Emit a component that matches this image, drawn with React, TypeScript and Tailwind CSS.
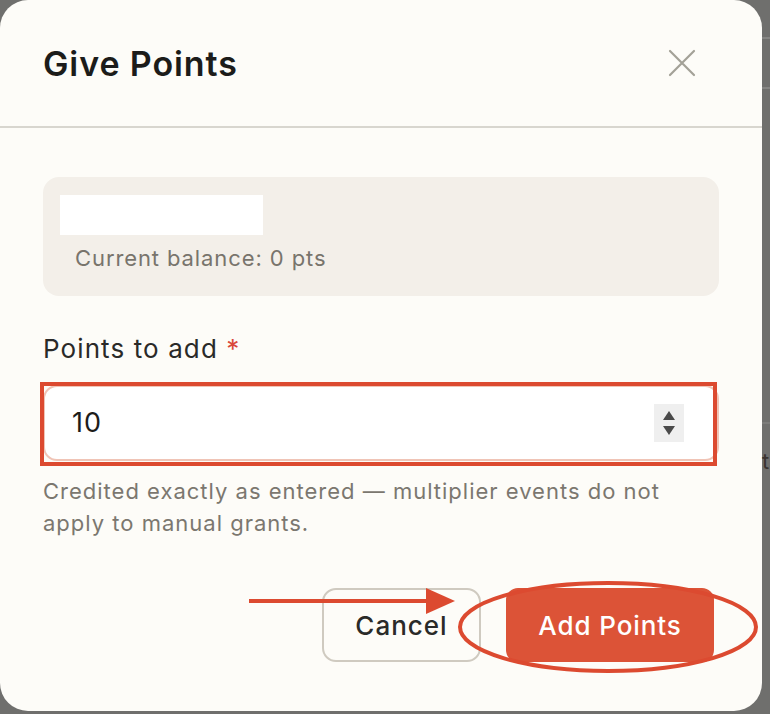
import React from "react";

const Spinner: React.FC = () => (
  <div className="flex h-[38px] w-[30px] flex-col items-center justify-center gap-[6px] bg-[#efefef]">
    <svg width="12" height="9" viewBox="0 0 12 9">
      <path d="M6 0 L12 9 L0 9 Z" fill="#4a4a4a" />
    </svg>
    <svg width="12" height="9" viewBox="0 0 12 9">
      <path d="M0 0 L12 0 L6 9 Z" fill="#4a4a4a" />
    </svg>
  </div>
);

// red marks drawn over the screenshot
const Annotations: React.FC = () => (
  <svg className="pointer-events-none absolute left-0 top-0" width="770" height="714" viewBox="0 0 770 714">
    <rect x="42" y="384" width="673" height="80" fill="none" stroke="#dc4a30" strokeWidth="4" />
    <line x1="249" y1="601" x2="430" y2="601" stroke="#dc4a30" strokeWidth="4" />
    <path d="M426 588 L455 601 L426 614 Z" fill="#dc4a30" />
    <ellipse cx="608" cy="627" rx="148" ry="44" fill="none" stroke="#dc4a30" strokeWidth="4" />
  </svg>
);

export default function App() {
  return (
    <div className="relative h-[714px] w-[770px] overflow-hidden bg-[#6f6f6d] font-['Inter',sans-serif]">
      {/* page behind the overlay, only a sliver shows */}
      <div className="absolute right-0 top-0 flex h-full w-[8px] flex-col">
        <div className="mt-[37px] h-[2px] bg-[#858583]" />
        <div className="mt-[48px] h-[2px] bg-[#858583]" />
        <div className="mt-[333px] h-[2px] bg-[#7c7c7a]" />
        <div className="mt-[26px] text-[22px] leading-none text-[#3a3330]">ts</div>
      </div>

      <div className="flex h-[711px] w-[762px] flex-col rounded-[28px] bg-[#fdfcf8]">
        <div className="flex h-[128px] shrink-0 items-center justify-between border-b-2 border-[#d8d6cf] pl-[43px] pr-[66px]">
          <h2 className="text-[34px] font-semibold tracking-[0.9px] text-[#1c1c1a]">Give Points</h2>
          <button type="button" className="text-[#a3a197]">
            <svg width="28" height="28" viewBox="0 0 28 28" fill="none" stroke="currentColor" strokeWidth="2.2" strokeLinecap="round">
              <path d="M2 2 L26 26 M26 2 L2 26" />
            </svg>
          </button>
        </div>

        <div className="flex flex-col px-[43px] pt-[49px]">
          <div className="flex h-[119px] flex-col rounded-[16px] bg-[#f3efe9] pl-[17px] pt-[18px]">
            <div className="h-[40px] w-[203px] bg-white" />
            <p className="mt-[8px] pl-[15px] text-[22px] leading-[30px] tracking-[0.9px] text-[#78746c]">
              Current balance: 0 pts
            </p>
          </div>

          <label htmlFor="points" className="mt-[36px] text-[26px] leading-[34px] tracking-[1.1px] text-[#2a2a28]">
            Points to add <span className="text-[#d9473a]">*</span>
          </label>

          <div className="mt-[19px] flex h-[76px] items-center rounded-[14px] border-2 border-[#f0c4b6] bg-white pl-[27px] pr-[27px]">
            <input
              id="points"
              type="text"
              defaultValue="10"
              className="w-full bg-transparent text-[27px] tracking-[1px] text-[#1c1c1a] outline-none"
            />
            <div className="mr-[6px]">
              <Spinner />
            </div>
          </div>

          <p className="mt-[14px] text-[22px] leading-[32px] tracking-[1px] text-[#7b776f]">
            Credited exactly as entered — multiplier events do not
            <br />
            apply to manual grants.
          </p>

          <div className="mt-[49px] flex justify-end gap-[25px] pr-[5px]">
            <button
              type="button"
              className="h-[74px] w-[159px] rounded-[14px] border-2 border-[#cfcac0] text-[26px] font-medium tracking-[1px] text-[#2a2a28]"
            >
              Cancel
            </button>
            <button
              type="button"
              className="h-[74px] w-[208px] rounded-[12px] bg-[#dc5337] text-[26px] font-medium tracking-[0.9px] text-white"
            >
              Add Points
            </button>
          </div>
        </div>
      </div>

      <Annotations />
    </div>
  );
}
